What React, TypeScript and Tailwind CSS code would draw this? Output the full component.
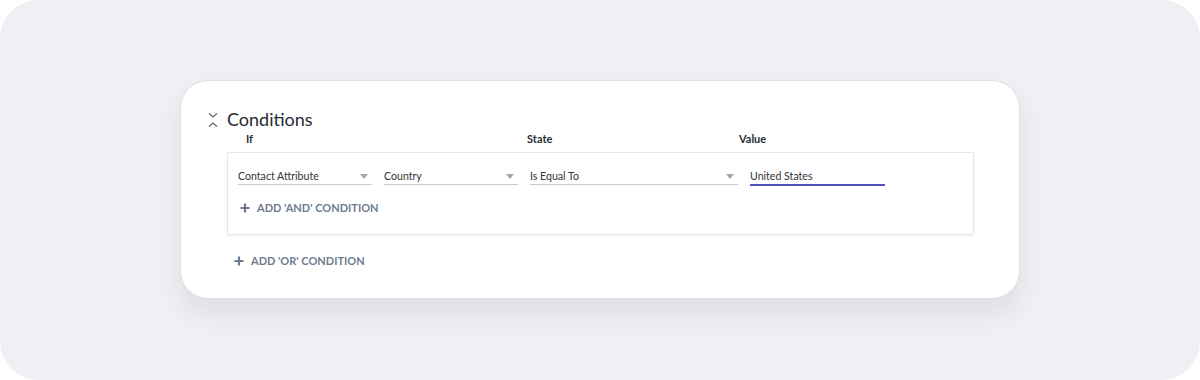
import React from "react";

const Caret = () => (
  <svg width="8" height="5" viewBox="0 0 8 5" className="shrink-0 mb-[5px]">
    <path d="M0 0h8L4 5z" fill="#a3a9b2" />
  </svg>
);

const Plus = () => (
  <svg width="10" height="10" viewBox="0 0 10 10" className="shrink-0">
    <path d="M5 0.5v9M0.5 5h9" stroke="#6f7c8f" strokeWidth="2.2" />
  </svg>
);

const Select = ({ label, width }: { label: string; width: string }) => (
  <div className={`${width} flex items-end justify-between border-b border-[#c9ccd1] pr-[4px] text-[10.6px] leading-[15px]`}>
    <span className="text-[#333]">{label}</span>
    <Caret />
  </div>
);

export default function App() {
  return (
    <div className="bg-white w-[1200px] h-[380px]" style={{ fontFamily: "Lato, 'Open Sans', sans-serif" }}>
      <div className="w-[1200px] h-[380px] rounded-[38px] bg-[#eff0f3] pt-[80px] pl-[180px]">
        <div className="w-[840px] h-[219px] bg-white rounded-[28px] border border-[#dcdfe4] shadow-[0_14px_26px_rgba(40,50,70,0.09)] pt-[26px] pl-[27px]">
          {/* header */}
          <div className="flex items-center gap-[9px]">
            <svg width="10" height="16" viewBox="0 0 10 16" className="mt-[2px]">
              <path d="M1 1.5l4 3.5 4-3.5" fill="none" stroke="#5c6470" strokeWidth="1.2" />
              <path d="M1 14.5l4-3.5 4 3.5" fill="none" stroke="#5c6470" strokeWidth="1.2" />
            </svg>
            <span className="text-[18px] leading-[24px] text-[#262a30]">Conditions</span>
          </div>

          {/* column labels */}
          <div className="flex text-[11px] font-bold text-[#2b2f35] leading-[14px] mt-[1px]">
            <span className="ml-[38px] w-[281px]">If</span>
            <span className="w-[212px]">State</span>
            <span>Value</span>
          </div>

          {/* and-group */}
          <div className="w-[747px] h-[83px] ml-[19px] mt-[6px] border border-[#e3e5e8] rounded-[2px] shadow-[0_1px_3px_rgba(0,0,0,0.06)] pl-[10px] pt-[16px]">
            <div className="flex items-end">
              <Select label="Contact Attribute" width="w-[134px]" />
              <div className="w-[12px]" />
              <Select label="Country" width="w-[134px]" />
              <div className="w-[12px]" />
              <Select label="Is Equal To" width="w-[208px]" />
              <div className="w-[12px]" />
              <div className="w-[135px] flex border-b-2 border-b-[#4d56b8] text-[10.6px] leading-[15px] mb-[-1px]">
                <span className="text-[#333]">United States</span>
              </div>
            </div>
            <button className="flex items-center gap-[7px] mt-[16px] ml-[2px] text-[11px] font-bold text-[#6f7c8f] leading-[14px]">
              <Plus />
              ADD 'AND' CONDITION
            </button>
          </div>

          <button className="flex items-center gap-[7px] mt-[19px] ml-[26px] text-[11px] font-bold text-[#6f7c8f] leading-[14px]">
            <Plus />
            ADD 'OR' CONDITION
          </button>
        </div>
      </div>
    </div>
  );
}
